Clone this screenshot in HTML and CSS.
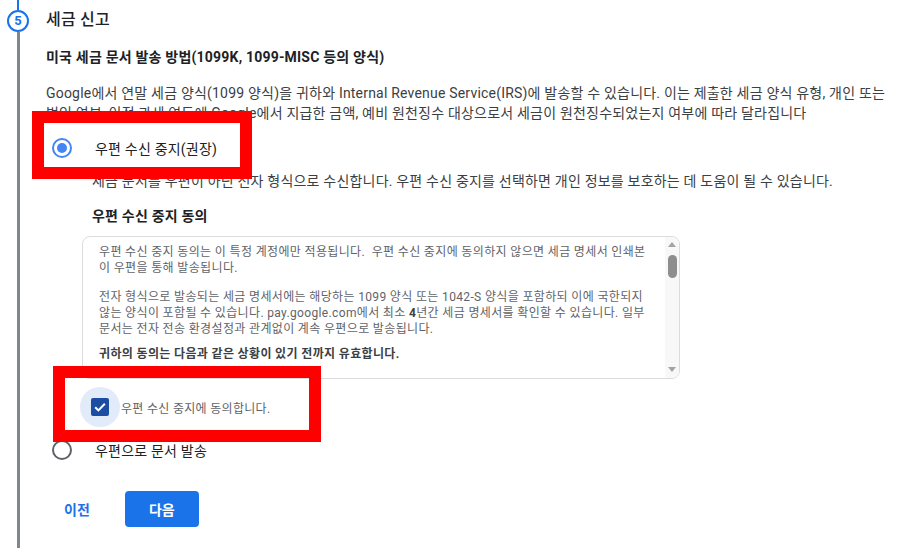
FILE: index.html
```html
<!DOCTYPE html>
<html lang="ko">
  <head>
    <meta charset="UTF-8" />
    <title>세금 신고</title>
    <meta name="viewport" content="width=device-width, initial-scale=1.0" />
    <link rel="stylesheet" href="styles.css">
  </head>
  <body>
    <div class="page">
      <div class="rail">
        <span class="rail-done"></span>
        <span class="step-num">5</span>
        <span class="rail-line"></span>
      </div>

      <section class="step">
        <h2 class="step-title">세금 신고</h2>
        <h3 class="section-title">미국 세금 문서 발송 방법(1099K, 1099-MISC 등의 양식)</h3>
        <p class="intro">
          Google에서 연말 세금 양식(1099 양식)을 귀하와 Internal Revenue Service(IRS)에 발송할 수 있습니다. 이는 제출한 세금 양식 유형, 개인 또는
          법인 여부, 이전 과세 연도에 Google에서 지급한 금액, 예비 원천징수 대상으로서 세금이 원천징수되었는지 여부에 따라 달라집니다
        </p>

        <div class="option">
          <span class="radio checked"></span>
          <span class="option-label">우편 수신 중지(권장)</span>
        </div>
        <div class="option-body">
          <p class="option-desc">세금 문서를 우편이 아닌 전자 형식으로 수신합니다. 우편 수신 중지를 선택하면 개인 정보를 보호하는 데 도움이 될 수 있습니다.</p>
          <h4 class="consent-title">우편 수신 중지 동의</h4>

          <div class="consent-box">
            <div class="consent-text">
              <p>우편 수신 중지 동의는 이 특정 계정에만 적용됩니다. &nbsp;우편 수신 중지에 동의하지 않으면 세금 명세서 인쇄본이 우편을 통해 발송됩니다.</p>
              <p>전자 형식으로 발송되는 세금 명세서에는 해당하는 1099 양식 또는 1042-S 양식을 포함하되 이에 국한되지 않는 양식이 포함될 수 있습니다. pay.google.com에서 최소 <b>4</b>년간 세금 명세서를 확인할 수 있습니다. 일부 문서는 전자 전송 환경설정과 관계없이 계속 우편으로 발송됩니다.</p>
              <p class="strong">귀하의 동의는 다음과 같은 상황이 있기 전까지 유효합니다.</p>
            </div>
            <div class="scrollbar">
              <span class="arrow up"></span>
              <span class="thumb"></span>
              <span class="arrow down"></span>
            </div>
          </div>

          <label class="consent-check">
            <span class="check-halo">
              <svg class="checkbox" width="18" height="18" viewBox="0 0 18 18">
                <rect width="18" height="18" rx="2" fill="#1b4ea3" />
                <path d="M4.2 9.3l3.2 3.1 6.4-6.6" fill="none" stroke="#fff" stroke-width="2" />
              </svg>
            </span>
            <span class="check-label">우편 수신 중지에 동의합니다.</span>
          </label>
        </div>

        <div class="option option-last">
          <span class="radio"></span>
          <span class="option-label">우편으로 문서 발송</span>
        </div>

        <div class="actions">
          <button class="btn-text">이전</button>
          <button class="btn-primary">다음</button>
        </div>
      </section>
    </div>

    <div class="mark mark-optout"></div>
    <div class="mark mark-agree"></div>
  </body>
</html>
```
FILE: styles.css
```css
* {
  box-sizing: border-box;
}
body {
  margin: 0;
  background: #fff;
  font-family: Roboto, "Noto Sans CJK KR", sans-serif;
  color: #3c4043;
  overflow: hidden;
}
.page {
  display: flex;
  gap: 10px;
  min-height: 100vh;
  padding-right: 30px;
}

/* stepper rail */
.rail {
  width: 36px;
  display: flex;
  flex-direction: column;
  align-items: center;
}
.rail-done {
  width: 2px;
  height: 10px;
  background: #1a73e8;
}
.rail-line {
  width: 3px;
  flex: 1;
  background: #80868b;
}
.step-num {
  width: 22px;
  height: 22px;
  border: 2px solid #1a73e8;
  border-radius: 50%;
  color: #1a73e8;
  font-size: 13px;
  font-weight: 700;
  line-height: 18px;
  text-align: center;
}

/* step content */
.step {
  flex: 1;
  padding-top: 8px;
  letter-spacing: 0.2px;
}
.step-title {
  margin: 0;
  font-size: 16px;
  font-weight: 500;
  line-height: 24px;
  color: #202124;
}
.section-title {
  margin: 15px 0 0;
  font-size: 14px;
  font-weight: 700;
  line-height: 20px;
  color: #202124;
}
.intro {
  margin: 16px 0 0;
  font-size: 14px;
  line-height: 20px;
}

.option {
  display: flex;
  align-items: center;
  height: 40px;
  margin-top: 5px;
  padding-left: 6px;
  gap: 23px;
  font-size: 14px;
}
.option-last {
  margin-top: 3px;
}
.radio {
  width: 20px;
  height: 20px;
  border: 2px solid #5f6368;
  border-radius: 50%;
  display: flex;
  align-items: center;
  justify-content: center;
}
.radio.checked {
  border-color: #4285f4;
}
.radio.checked::after {
  content: "";
  width: 10px;
  height: 10px;
  border-radius: 50%;
  background: #4285f4;
}
.option-label {
  color: #202124;
}

.option-body {
  margin-left: 36px;
}
.option-desc {
  margin: 3px 0 0;
  padding-left: 10px;
  font-size: 14px;
  line-height: 20px;
}
.consent-title {
  margin: 15px 0 0;
  padding-left: 10px;
  font-size: 14px;
  font-weight: 700;
  line-height: 20px;
  color: #202124;
}

.consent-box {
  display: flex;
  width: 598px;
  height: 143px;
  margin-top: 10px;
  border: 1px solid #dadce0;
  border-radius: 8px;
  overflow: hidden;
}
.consent-text {
  flex: 1;
  padding: 7px 10px 0 16px;
  font-size: 12px;
  line-height: 16px;
  letter-spacing: 0.35px;
  color: #5f6368;
  overflow: hidden;
}
.consent-text p {
  margin: 0 0 13px;
}
.consent-text p:nth-child(2) {
  margin-bottom: 9px;
}
.consent-text b,
.consent-text .strong {
  font-weight: 700;
  color: #3c4043;
}
.scrollbar {
  width: 14px;
  background: #f8f8f8;
  display: flex;
  flex-direction: column;
  align-items: center;
  padding: 5px 0 6px;
}
.arrow {
  width: 0;
  height: 0;
  border-left: 4px solid transparent;
  border-right: 4px solid transparent;
}
.arrow.up {
  border-bottom: 5px solid #a3a3a3;
}
.arrow.down {
  margin-top: auto;
  border-top: 5px solid #a3a3a3;
}
.thumb {
  width: 9px;
  height: 23px;
  margin-top: 8px;
  border-radius: 5px;
  background: #8e8e8e;
}

.consent-check {
  display: flex;
  align-items: center;
  margin: 8px 0 0 -2px;
  font-size: 12px;
  letter-spacing: 0.3px;
  color: #5f6368;
}
.check-halo {
  width: 40px;
  height: 40px;
  border-radius: 50%;
  background: #e2ebfa;
  display: flex;
  align-items: center;
  justify-content: center;
}
.checkbox {
  display: block;
}
.check-label {
  margin-left: 1px;
}

.actions {
  display: flex;
  gap: 17px;
  margin-top: 21px;
}
.actions button {
  height: 36px;
  border: none;
  border-radius: 4px;
  font-family: inherit;
  font-size: 14px;
  font-weight: 700;
}
.btn-text {
  background: none;
  color: #1a73e8;
  padding: 0 18px;
}
.btn-primary {
  width: 74px;
  background: #1a73e8;
  color: #fff;
}

/* red annotation frames */
.mark {
  position: absolute;
  border: 12px solid #ff0000;
}
.mark-optout {
  left: 32px;
  top: 111px;
  width: 220px;
  height: 68px;
}
.mark-agree {
  left: 53px;
  top: 366px;
  width: 268px;
  height: 76px;
}
```
